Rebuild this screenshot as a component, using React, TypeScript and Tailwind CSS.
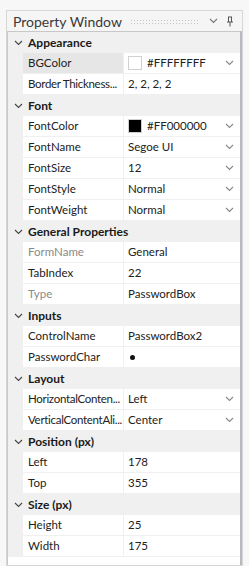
import React from "react";

type Row =
  | { kind: "h"; label: string }
  | { kind: "p"; name: string; value: string; dd?: boolean; sw?: string; ro?: boolean; sel?: boolean; dot?: boolean; tight?: boolean };

const rows: Row[] = [
  { kind: "h", label: "Appearance" },
  { kind: "p", name: "BGColor", value: "#FFFFFFFF", dd: true, sw: "#ffffff", sel: true },
  { kind: "p", name: "Border Thickness...", value: "2, 2, 2, 2", tight: true },
  { kind: "h", label: "Font" },
  { kind: "p", name: "FontColor", value: "#FF000000", dd: true, sw: "#000000" },
  { kind: "p", name: "FontName", value: "Segoe UI", dd: true },
  { kind: "p", name: "FontSize", value: "12", dd: true },
  { kind: "p", name: "FontStyle", value: "Normal", dd: true },
  { kind: "p", name: "FontWeight", value: "Normal", dd: true },
  { kind: "h", label: "General Properties" },
  { kind: "p", name: "FormName", value: "General", ro: true },
  { kind: "p", name: "TabIndex", value: "22" },
  { kind: "p", name: "Type", value: "PasswordBox", ro: true },
  { kind: "h", label: "Inputs" },
  { kind: "p", name: "ControlName", value: "PasswordBox2" },
  { kind: "p", name: "PasswordChar", value: "", dot: true },
  { kind: "h", label: "Layout" },
  { kind: "p", name: "HorizontalConten...", value: "Left", dd: true, tight: true },
  { kind: "p", name: "VerticalContentAli...", value: "Center", dd: true, tight: true },
  { kind: "h", label: "Position (px)" },
  { kind: "p", name: "Left", value: "178" },
  { kind: "p", name: "Top", value: "355" },
  { kind: "h", label: "Size (px)" },
  { kind: "p", name: "Height", value: "25" },
  { kind: "p", name: "Width", value: "175" },
];

const Chevron = ({ className = "" }: { className?: string }) => (
  <svg width="9" height="6" viewBox="0 0 9 6" className={className}>
    <path d="M1 1 L4.5 4.5 L8 1" fill="none" stroke="currentColor" strokeWidth="1.1" />
  </svg>
);

export default function App() {
  return (
    <div
      className="w-[249px] h-[566px] bg-[#f7f7f7] pt-[10px] pl-[6px] overflow-hidden"
      style={{ fontFamily: '"Segoe UI", Lato, "Noto Sans", sans-serif' }}
    >
      <div className="w-[237px] h-[556px] border border-[#d6d6d6] bg-[#f5f5f5] flex flex-col">
        <div className="h-[20px] flex items-center pl-[6px] pr-[8px] text-[14px] text-[#3a3a3a]">
          <span>Property Window</span>
          <div
            className="flex-1 h-[5px] mx-[6px] ml-[8px]"
            style={{
              backgroundImage: "radial-gradient(circle, #c4c4c4 0.7px, transparent 0.8px)",
              backgroundSize: "3px 3px",
            }}
          />
          <Chevron className="text-[#777] mx-[5px]" />
          <svg width="8" height="11" viewBox="0 0 8 11" className="text-[#555] ml-[3px]">
            <path d="M2 1 H6 M2.5 1 V6 M5.5 1 V6 M1 6 H7 M4 6 V10.5" fill="none" stroke="currentColor" strokeWidth="1" />
          </svg>
        </div>
        <div className="flex-1 bg-white border-t border-l border-[#c8c8c8] border-r-[2px] border-r-[#b8b8c0] flex flex-col">
          {rows.map((r, i) =>
            r.kind === "h" ? (
              <div key={i} className="h-[21px] shrink-0 bg-[#f0f0f0] flex items-center text-[12px] font-bold text-[#1a1a1a]">
                <div className="w-[20px] flex justify-center pl-[1px]">
                  <Chevron className="text-[#444]" />
                </div>
                <span>{r.label}</span>
              </div>
            ) : (
              <div key={i} className="h-[21px] shrink-0 flex text-[11.5px]">
                <div className="w-[15px] bg-[#f0f0f0]" />
                <div
                  className={`w-[101px] border-r border-b border-[#f0f0f0] pl-[5px] flex items-center whitespace-nowrap overflow-hidden ${
                    r.sel ? "bg-[#e6e6e6]" : "bg-white"
                  } ${r.ro ? "text-[#8a8a8a]" : "text-[#222]"} ${r.tight ? "tracking-[-0.3px]" : ""}`}
                >
                  {r.name}
                </div>
                <div className="flex-1 border-b border-[#f0f0f0] flex items-center pl-[4px] pr-[6px] text-[#222]">
                  {r.sw && (
                    <div
                      className="w-[14px] h-[14px] border border-[#d0d0d0] mr-[5px]"
                      style={{ backgroundColor: r.sw }}
                    />
                  )}
                  {r.dot ? <div className="w-[5px] h-[5px] rounded-full bg-[#111] ml-[2px]" /> : <span>{r.value}</span>}
                  <div className="flex-1" />
                  {r.dd && <Chevron className="text-[#888]" />}
                </div>
              </div>
            )
          )}
        </div>
      </div>
    </div>
  );
}
